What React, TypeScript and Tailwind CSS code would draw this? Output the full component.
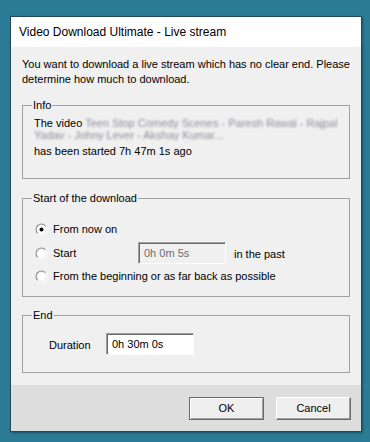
import React from "react";

const font = { fontFamily: '"Liberation Sans", Arial, sans-serif' };

function Radio({ checked }: { checked?: boolean }) {
  return (
    <svg width="13" height="13" viewBox="0 0 13 13" className="shrink-0">
      <defs>
        <linearGradient id={checked ? "rgA" : "rgB"} x1="0" y1="0" x2="1" y2="1">
          <stop offset="0.45" stopColor="#8a8a8a" />
          <stop offset="0.55" stopColor="#ffffff" />
        </linearGradient>
      </defs>
      <circle cx="6.5" cy="6.5" r="6" fill={`url(#${checked ? "rgA" : "rgB"})`} />
      <circle cx="6.5" cy="6.5" r="5" fill="#e3e3e3" />
      <circle cx="6.5" cy="6.5" r="4.2" fill="#ffffff" />
      {checked && <circle cx="6.5" cy="6.5" r="2" fill="#000000" />}
    </svg>
  );
}

export default function App() {
  return (
    <div
      className="w-[370px] h-[442px] bg-[#2b7b97] pt-[16px] pl-[10px] overflow-hidden"
      style={font}
    >
      <div className="w-[352px] h-[416px] border border-[#24485a] bg-[#f0f0f0] flex flex-col shadow-[1px_1px_2px_rgba(0,0,0,0.35)]">
        <div className="h-[30px] bg-white flex items-center pl-[8px] text-[12px] text-black">
          Video Download Ultimate - Live stream
        </div>
        <div className="flex-1 flex flex-col px-[11px] text-[11px] text-black leading-[15px]">
          <p className="mt-[10px] -mr-[4px]">
            You want to download a live stream which has no clear end. Please determine how much to download.
          </p>

          <fieldset className="mt-[12px] border border-[#a0a0a0] h-[80px] px-[11px] pt-[5px]">
            <legend className="px-[1px] -ml-[2px] leading-[13px]">Info</legend>
            <div className="leading-[12px] overflow-hidden">
              The video{" "}
              <span className="text-[#8f8f9a] blur-[1.2px]">
                Teen Stop Comedy Scenes - Paresh Rawal - Rajpal Yadav - Johny Lever - Akshay Kumar...
              </span>
            </div>
            <div className="mt-[4px] leading-[12px]">has been started 7h 47m 1s ago</div>
          </fieldset>

          <fieldset className="mt-[13px] border border-[#a0a0a0] h-[105px] pl-[12px] pt-[17px]">
            <legend className="px-[1px] -ml-[3px] leading-[13px]">Start of the download</legend>
            <div className="flex items-center h-[14px]">
              <Radio checked />
              <span className="ml-[5px]">From now on</span>
            </div>
            <div className="flex items-center h-[22px] mt-[6px]">
              <Radio />
              <span className="ml-[5px] w-[85px]">Start</span>
              <div className="w-[88px] h-[22px] border-t border-l border-[#a0a0a0] border-b border-r border-b-white border-r-white shadow-[inset_1px_1px_0_#696969] bg-[#f0f0f0] text-[#6d6d6d] pl-[5px] pt-[3px] leading-[14px]">
                0h 0m 5s
              </div>
              <span className="ml-[8px] mt-[2px]">in the past</span>
            </div>
            <div className="flex items-center h-[14px] mt-[5px]">
              <Radio />
              <span className="ml-[5px]">From the beginning or as far back as possible</span>
            </div>
          </fieldset>

          <fieldset className="mt-[12px] border border-[#a0a0a0] h-[64px] pl-[26px] pt-[11px]">
            <legend className="px-[1px] -ml-[17px] leading-[13px]">End</legend>
            <div className="flex items-center">
              <span className="w-[57px] pt-[2px]">Duration</span>
              <div className="w-[88px] h-[22px] border-t border-l border-[#a0a0a0] border-b border-r border-b-white border-r-white shadow-[inset_1px_1px_0_#696969] bg-white pl-[5px] pt-[3px] leading-[14px]">
                0h 30m 0s
              </div>
            </div>
          </fieldset>
        </div>
        <div className="h-[46px] bg-[#dddddd] flex items-start justify-end gap-[12px] pr-[10px] pt-[12px] text-[11px] text-black">
          <button className="w-[75px] h-[23px] bg-[#efefef] border border-[#6a6a6a] shadow-[inset_1px_1px_0_#ffffff,inset_-1px_-1px_0_#a0a0a0]">
            OK
          </button>
          <button className="w-[75px] h-[23px] bg-[#efefef] border border-t-white border-l-white border-b-[#696969] border-r-[#696969] shadow-[inset_-1px_-1px_0_#a0a0a0]">
            Cancel
          </button>
        </div>
      </div>
    </div>
  );
}
